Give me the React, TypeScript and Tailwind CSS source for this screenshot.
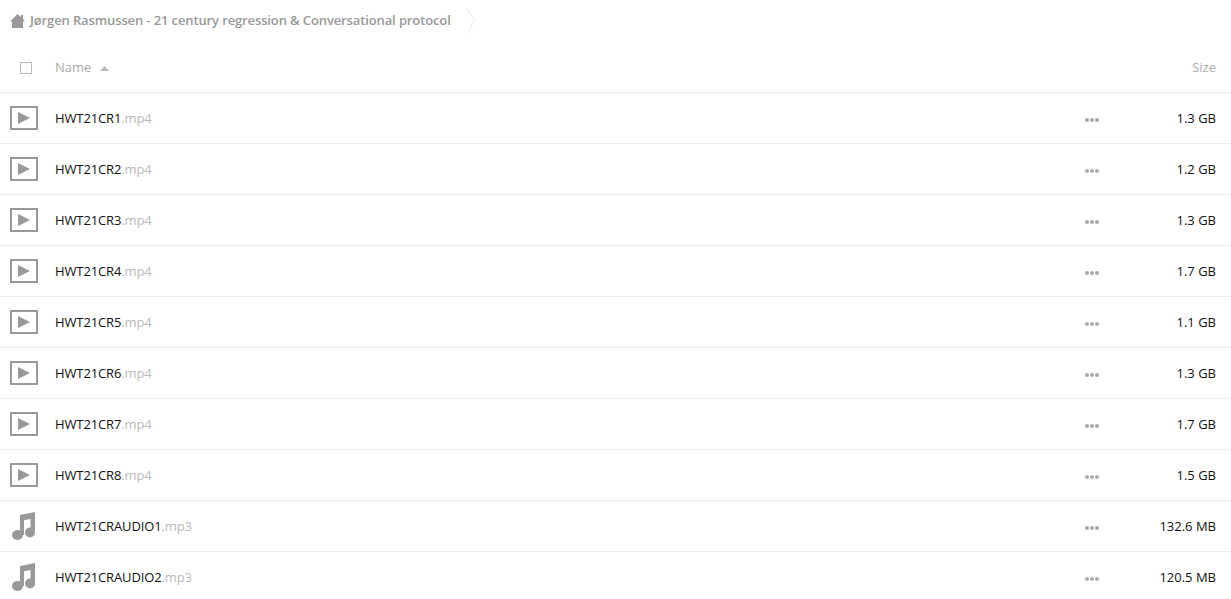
import React from 'react';

const files = [
  { name: 'HWT21CR1', ext: '.mp4', size: '1.3 GB', type: 'video' },
  { name: 'HWT21CR2', ext: '.mp4', size: '1.2 GB', type: 'video' },
  { name: 'HWT21CR3', ext: '.mp4', size: '1.3 GB', type: 'video' },
  { name: 'HWT21CR4', ext: '.mp4', size: '1.7 GB', type: 'video' },
  { name: 'HWT21CR5', ext: '.mp4', size: '1.1 GB', type: 'video' },
  { name: 'HWT21CR6', ext: '.mp4', size: '1.3 GB', type: 'video' },
  { name: 'HWT21CR7', ext: '.mp4', size: '1.7 GB', type: 'video' },
  { name: 'HWT21CR8', ext: '.mp4', size: '1.5 GB', type: 'video' },
  { name: 'HWT21CRAUDIO1', ext: '.mp3', size: '132.6 MB', type: 'audio' },
  { name: 'HWT21CRAUDIO2', ext: '.mp3', size: '120.5 MB', type: 'audio' },
];

const VideoIcon = () => (
  <svg width="28" height="24" viewBox="0 0 28 24">
    <rect x="1" y="1" width="26" height="22" fill="none" stroke="#999" strokeWidth="2" />
    <path d="M8 6 L20 12 L8 18 Z" fill="#999" />
  </svg>
);

const AudioIcon = () => (
  <svg width="23" height="28" viewBox="0 0 23 28">
    <path d="M8 3 L23 0 V20 H18.5 V7 L12 8.2 V23 H8 Z" fill="#999" />
    <ellipse cx="5.5" cy="23" rx="5.5" ry="5" fill="#999" />
    <ellipse cx="18" cy="20.5" rx="5" ry="5" fill="#999" />
  </svg>
);

const App: React.FC = () => {
  return (
    <div className="h-[599px] overflow-hidden bg-white font-['Open_Sans',sans-serif] text-[13px]">
      {/* Breadcrumb */}
      <div className="flex h-[41px] items-center pl-[10px] text-[#999]">
        <svg width="15" height="14" viewBox="0 0 15 14" className="mr-[5px]">
          <path d="M7.5 0 L11 3 V1 H13 V5 L15 7.5 H13 V14 H2 V7.5 H0 Z" fill="#999" />
        </svg>
        <span className="font-semibold tracking-[-0.12px]">Jørgen Rasmussen - 21 century regression &amp; Conversational protocol</span>
        <svg width="10" height="26" viewBox="0 0 10 26" className="ml-[15px]">
          <path d="M1 1 L8.5 13 L1 25" fill="none" stroke="#e4e4e4" strokeWidth="1" />
        </svg>
      </div>

      {/* Header */}
      <div className="flex h-[52px] items-center border-b border-[#eeeeee] pt-[3px] text-[#aaa]">
        <div className="ml-[20px] h-[12px] w-[12px] border border-[#bbb]" />
        <span className="ml-[23px]">Name</span>
        <svg width="9" height="5" viewBox="0 0 9 5" className="ml-[9px]">
          <path d="M4.5 0 L9 5 L0 5 Z" fill="#bbb" />
        </svg>
        <span className="ml-auto mr-[15px]">Size</span>
      </div>

      {/* Rows */}
      {files.map((file) => (
        <div key={file.name} className="flex h-[51px] items-center border-b border-[#eeeeee]">
          <div className={file.type === 'video' ? 'w-[55px] pl-[10px]' : 'w-[55px] pl-[12px]'}>
            {file.type === 'video' ? <VideoIcon /> : <AudioIcon />}
          </div>
          <span className="pt-[2px] tracking-[-0.12px] text-[#111]">{file.name}</span>
          <span className="pt-[2px] tracking-[-0.12px] text-[#bbb]">{file.ext}</span>
          <div className="ml-auto mt-[3px] flex gap-[1px]">
            <span className="h-[4px] w-[4px] rounded-full bg-[#aaa]" />
            <span className="h-[4px] w-[4px] rounded-full bg-[#aaa]" />
            <span className="h-[4px] w-[4px] rounded-full bg-[#aaa]" />
          </div>
          <span className="w-[132px] pr-[15px] pt-[2px] text-right text-[#111]">{file.size}</span>
        </div>
      ))}
    </div>
  );
};

export default App;
